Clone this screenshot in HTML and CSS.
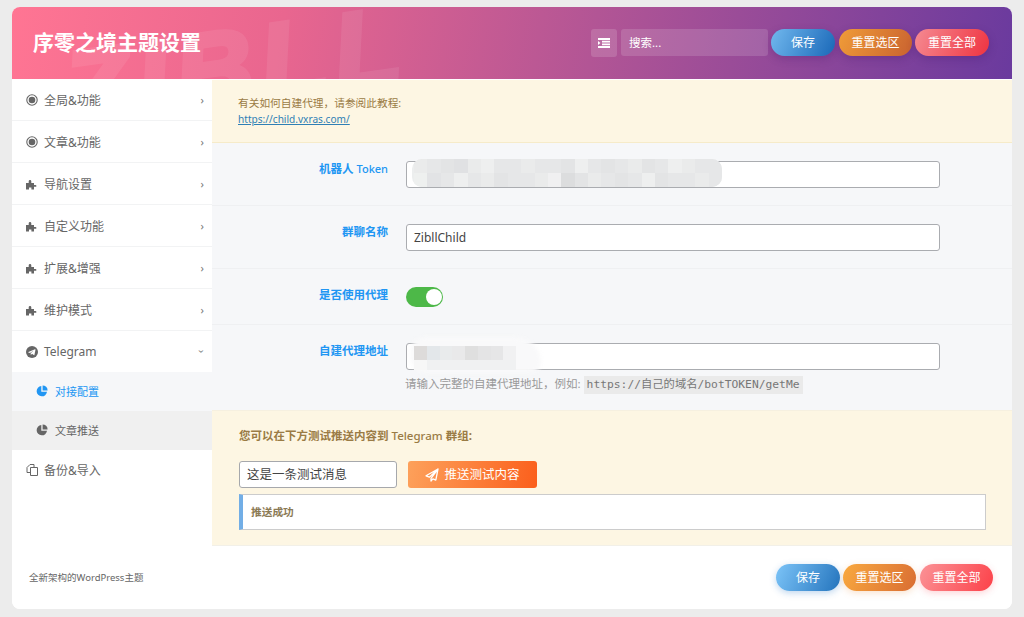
FILE: index.html
```html
<!DOCTYPE html>
<html lang="zh">
<head>
<meta charset="utf-8">
<title>序零之境主题设置</title>
<link rel="stylesheet" href="styles.css">
</head>
<body>
<svg class="defs" width="0" height="0">
  <symbol id="i-target" viewBox="0 0 12 12"><circle cx="6" cy="6" r="5.200" fill="none" stroke="currentColor" stroke-width="1.100"/><circle cx="6" cy="6" r="3.300" fill="currentColor"/></symbol>
  <symbol id="i-puzzle" viewBox="0 0 12 12"><path fill="currentColor" d="M0 11.500V5h2.700V3.300a1.300 1.300 0 1 1 2.600 0V5H8v2h1.500a.9.9 0 1 1 0 1.800H8v2.700H5.400V9.500H3v2z"/></symbol>
  <symbol id="i-pie" viewBox="0 0 12 12"><path fill="currentColor" d="M5.300 1A5.200 5.200 0 1 0 11 6.800H5.300zM6.600.4v5h5A5 5 0 0 0 6.600.4z"/></symbol>
  <symbol id="i-tg" viewBox="0 0 12 12"><circle cx="6" cy="6" r="6" fill="currentColor"/><path fill="#fff" d="M2.400 5.900 9 3.300c.3-.1.600.1.500.5L8.400 8.900c-.1.300-.4.400-.7.200L6 7.800l-.9.900c-.2.100-.4 0-.4-.2V7.200l3-2.600-3.700 2.300-1.600-.5c-.3-.1-.3-.4 0-.5z"/></symbol>
  <symbol id="i-copy" viewBox="0 0 12 12"><path fill="none" stroke="currentColor" stroke-width="1" stroke-linejoin="round" d="M4.500 3.500h7v8h-7zM4.500 8.500h-3.500v-5l3-3h4v3"/></symbol>
</svg>
<div class="card">
  <header class="top">
    <span class="watermark">ZIBLL</span>
    <h1 class="brand">序零之境主题设置</h1>
    <div class="tools">
      <span class="menu-btn">
        <svg width="12" height="10" viewBox="0 0 12 10"><path fill="#fff" d="M0 0h12v2H0zM4 2.800h8v1.800H4zM4 5.400h8v1.800H4zM0 8h12v2H0zM0 3l2.400 2L0 7z"/></svg>
      </span>
      <span class="search">搜索...</span>
      <span class="pill pill-blue">保存</span>
      <span class="pill pill-orange">重置选区</span>
      <span class="pill pill-red">重置全部</span>
    </div>
  </header>
  <div class="body">
    <nav class="side">
      <a class="nav"><svg class="ico"><use href="#i-target"/></svg>全局&amp;功能<span class="chev">›</span></a>
      <a class="nav"><svg class="ico"><use href="#i-target"/></svg>文章&amp;功能<span class="chev">›</span></a>
      <a class="nav"><svg class="ico"><use href="#i-puzzle"/></svg>导航设置<span class="chev">›</span></a>
      <a class="nav"><svg class="ico"><use href="#i-puzzle"/></svg>自定义功能<span class="chev">›</span></a>
      <a class="nav"><svg class="ico"><use href="#i-puzzle"/></svg>扩展&amp;增强<span class="chev">›</span></a>
      <a class="nav"><svg class="ico"><use href="#i-puzzle"/></svg>维护模式<span class="chev">›</span></a>
      <a class="nav nav-open"><svg class="ico"><use href="#i-tg"/></svg>Telegram<span class="chev chev-down">›</span></a>
      <a class="sub sub-on"><svg class="ico"><use href="#i-pie"/></svg>对接配置</a>
      <a class="sub sub-off"><svg class="ico"><use href="#i-pie"/></svg>文章推送</a>
      <a class="nav nav-last"><svg class="ico"><use href="#i-copy"/></svg>备份&amp;导入</a>
    </nav>
    <main class="main">
      <section class="notice">
        <p class="notice-line">有关如何自建代理，请参阅此教程:</p>
        <a class="notice-link">https://child.vxras.com/</a>
      </section>
      <section class="row row-token">
        <label class="lbl">机器人 <span class="lbl-latin">Token</span></label>
        <div class="field">
          <div class="input"></div>
          <div class="blur blur-token">
            <i></i><i></i><i></i><i></i><i></i><i></i><i></i><i></i><i></i><i></i><i></i><i></i><i></i><i></i><i></i><i></i><i></i><i></i><i></i><i></i><i></i><i></i><i></i>
            <i></i><i></i><i></i><i></i><i></i><i></i><i></i><i></i><i></i><i></i><i></i><i></i><i></i><i></i><i></i><i></i><i></i><i></i><i></i><i></i><i></i><i></i><i></i>
          </div>
        </div>
      </section>
      <section class="row row-group">
        <label class="lbl">群聊名称</label>
        <div class="field"><div class="input">ZibllChild</div></div>
      </section>
      <section class="row row-switch">
        <label class="lbl">是否使用代理</label>
        <div class="field"><span class="switch"><span class="knob"></span></span></div>
      </section>
      <section class="row row-proxy">
        <label class="lbl">自建代理地址</label>
        <div class="field">
          <div class="input"></div>
          <div class="blob"></div>
          <div class="blur blur-proxy">
            <i></i><i></i><i></i><i></i><i></i><i></i><i></i><i></i>
            <i></i><i></i><i></i><i></i><i></i><i></i><i></i><i></i>
          </div>
          <p class="hint">请输入完整的自建代理地址，例如: <code class="code">https://自己的域名/botTOKEN/getMe</code></p>
        </div>
      </section>
      <section class="test">
        <p class="test-title">您可以在下方测试推送内容到 <span class="title-latin">Telegram</span> 群组:</p>
        <div class="test-form">
          <div class="test-input">这是一条测试消息</div>
          <span class="push-btn">
            <svg width="14" height="14" viewBox="0 0 14 14"><path fill="none" stroke="#fff" stroke-width="1.300" stroke-linejoin="round" d="M13 1 1 7.800l3.400 1.400L13 1 6 10.300v2.700l1.900-2.100 2.900 1.200z"/></svg>
            推送测试内容
          </span>
        </div>
        <div class="result">推送成功</div>
      </section>
    </main>
  </div>
  <footer class="foot">
    <span class="foot-text">全新架构的WordPress主题</span>
    <div class="foot-btns">
      <span class="pill pill-blue2">保存</span>
      <span class="pill pill-orange2">重置选区</span>
      <span class="pill pill-red2">重置全部</span>
    </div>
  </footer>
</div>
</body>
</html>
```
FILE: styles.css
```css
* { box-sizing: border-box; }
html, body { margin: 0; height: 617px; overflow: hidden; }
body {
  background: #ececec;
  padding: 7px 12px 8px;
  font-family: "Noto Sans", "Noto Sans CJK SC", "Liberation Sans", sans-serif;
  font-size: 12px;
  color: #555;
}
.defs { position: absolute; }
.card {
  height: 602px;
  background: #fff;
  border-radius: 8px;
  overflow: hidden;
  display: flex;
  flex-direction: column;
}
.top {
  position: relative;
  height: 72px;
  flex: none;
  display: flex;
  align-items: center;
  justify-content: space-between;
  padding: 0 23px 2px 21px;
  overflow: hidden;
  background: linear-gradient(100deg, #ff7593 0%, #e9668f 27%, #b25595 58%, #6a3a9e 100%);
}
.watermark {
  position: absolute;
  left: 60px;
  top: 30px;
  font: italic 700 108px/1 "Liberation Sans", sans-serif;
  letter-spacing: 8px;
  color: #fff;
  -webkit-text-stroke: 5px #fff;
  opacity: .08;
  transform: rotate(-8deg);
  transform-origin: left bottom;
}
.brand {
  position: relative;
  margin: 0 0 2px;
  font-size: 21px;
  line-height: 28px;
  font-weight: 700;
  color: #fff;
  font-family: "Noto Sans CJK SC", sans-serif;
}
.tools { position: relative; display: flex; align-items: flex-start; margin-top: 1px; }
.menu-btn {
  width: 26px;
  height: 28px;
  margin-right: 4px;
  border-radius: 3px;
  background: rgba(255, 255, 255, .15);
  display: flex;
  align-items: center;
  justify-content: center;
}
.search {
  width: 147px;
  height: 27px;
  padding-left: 8px;
  margin-right: 3px;
  border-radius: 3px;
  background: rgba(255, 255, 255, .14);
  color: #fff;
  font-size: 11.500px;
  line-height: 27px;
}
.pill {
  height: 27px;
  border-radius: 14px;
  color: #fff;
  font-size: 12px;
  line-height: 27px;
  text-align: center;
  box-shadow: 0 3px 8px rgba(60, 20, 100, .25);
}
.pill-blue { width: 64px; background: linear-gradient(115deg, #71b8ee, #1a68b8); }
.pill-orange { width: 73px; margin-left: 4px; background: linear-gradient(115deg, #f09c38, #c96230); }
.pill-red { width: 74px; margin-left: 3px; background: linear-gradient(115deg, #f58a92, #ef3340); }
.body { flex: 1; display: flex; min-height: 0; }
.side { width: 200px; flex: none; background: #fff; }
.nav {
  height: 42px;
  display: flex;
  align-items: center;
  padding: 0 0 0 14px;
  color: #666;
  font-size: 12px;
  border-bottom: 1px solid #f2f3f4;
}
.nav-open { height: 41px; border-bottom: 0; }
.nav-last { height: 40px; border-bottom: 0; }
.ico { width: 12px; height: 12px; margin-right: 6px; color: #666; flex: none; }
.nav .chev { margin-left: auto; margin-right: 8px; font-size: 11px; color: #777; }
.chev-down { transform: rotate(90deg); }
.sub {
  height: 39px;
  display: flex;
  align-items: center;
  padding: 0 0 1px 24px;
  font-size: 11px;
  color: #666;
}
.sub .ico { margin-right: 7px; }
.sub-on { background: #f6f7f9; color: #2196f3; }
.sub-on .ico { color: #2196f3; }
.sub-off { background: #f0f0f0; }
.main { flex: 1; background: #f6f7f9; min-width: 0; }
.notice {
  height: 64px;
  padding: 15px 26px 0;
  background: #fdf6e3;
  border-bottom: 1px solid #f6ebc9;
  border-top: 1px solid #fff;
  color: #9a7b45;
  font-size: 10.700px;
  line-height: 16px;
}
.notice-line { margin: 0; }
.notice-link { font-size: 10.100px; color: #2f7fb5; text-decoration: underline; }
.row {
  display: flex;
  border-bottom: 1px solid #eff0f2;
}
.row-token { height: 63px; padding-top: 18px; }
.row-group { height: 63px; padding-top: 18px; }
.row-switch { height: 56px; padding-top: 18px; }
.row-proxy { height: 86px; padding-top: 18px; border-bottom: 1px solid #f6f0e0; }
.lbl {
  width: 176px;
  text-align: right;
  color: #2196f3;
  font-size: 11.500px;
  line-height: 16px;
  font-weight: 700;
  flex: none;
}
.lbl-latin { font-weight: 500; font-size: 11px; }
.field { position: relative; margin-left: 18px; width: 534px; }
.input {
  height: 27px;
  border: 1px solid #aaacb0;
  border-radius: 3px;
  background: #fff;
  padding-left: 7px;
  line-height: 25px;
  font-size: 12px;
  color: #444;
}
.switch {
  display: block;
  position: relative;
  width: 37px;
  height: 20px;
  border-radius: 10px;
  background: #4db848;
}
.knob {
  position: absolute;
  right: 1px;
  top: 2px;
  width: 16px;
  height: 16px;
  border-radius: 50%;
  background: #fff;
}
.blur {
  position: absolute;
  display: grid;
  overflow: hidden;
  filter: blur(.6px);
}
.blur-token {
  left: 6px;
  top: -2px;
  width: 310px;
  height: 28px;
  padding-left: 2px;
  border-radius: 10px;
  background: #eceeee;
  grid-template-columns: repeat(23, 1fr);
  grid-template-rows: 1fr 1fr;
}
.blur-token i { background: #e6e7e8; }
.blur-token i:nth-child(3n) { background: #e3e4e5; }
.blur-token i:nth-child(4n+1) { background: #eaebeb; }
.blur-token i:nth-child(7n+6) { background: #eeefef; }
.blur-token i:nth-child(35) { background: #dcddde; }
.blur-token i:nth-child(34) { background: #f0f0f1; }
.blur-token i:nth-child(4) { background: #e0e1e3; }
.blur-token i:nth-child(24) { background: #eef0ef; }
.blur-token i:nth-child(25) { background: #e2e3e5; }
.blob {
  position: absolute;
  left: 5px;
  top: -6px;
  width: 130px;
  height: 36px;
  border-radius: 16px 30px 12px 18px;
  background: #f9f9fa;
  filter: blur(2px);
}
.blur-proxy {
  left: 8px;
  top: 3px;
  width: 102px;
  height: 24px;
  grid-template-columns: repeat(8, 1fr);
  grid-template-rows: 14px 10px;
}
.blur-proxy i { background: #eeeeef; }
.blur-proxy i:nth-child(1) { background: #dddbda; }
.blur-proxy i:nth-child(2) { background: #e3e7ea; }
.blur-proxy i:nth-child(3) { background: #e9ebec; }
.blur-proxy i:nth-child(4) { background: #e9e9ea; }
.blur-proxy i:nth-child(5) { background: #dfdfdf; }
.blur-proxy i:nth-child(6) { background: #e4e4e5; }
.blur-proxy i:nth-child(7) { background: #e6e6e7; }
.blur-proxy i:nth-child(8) { background: #f1f1f2; }
.blur-proxy i:nth-child(9) { background: #f7f7f7; }
.blur-proxy i:nth-child(n+10) { background: #f0f1f2; }
.hint { position: relative; margin: 5px 0 0 -1px; color: #999; font-size: 11.500px; line-height: 18px; white-space: nowrap; }
.code {
  display: inline-block;
  padding: 0 3px;
  background: #eaeaea;
  color: #777;
  font-family: "DejaVu Sans Mono", "Noto Sans CJK SC", monospace;
  font-size: 11.300px;
}
.test { height: 135px; padding: 17px 26px 0 27px; background: #fdf6e3; border-bottom: 1px solid #f2f0e8; }
.test-title { margin: 0 0 17px; font-size: 11.500px; line-height: 16px; font-weight: 700; color: #9a7b45; }
.title-latin { font-weight: 500; }
.test-form { display: flex; align-items: flex-start; margin-bottom: 6px; }
.test-input {
  width: 158px;
  height: 27px;
  border: 1px solid #a6a8ac;
  border-radius: 3px;
  background: #fff;
  padding-left: 7px;
  line-height: 25px;
  font-size: 12.500px;
  color: #444;
}
.push-btn {
  width: 129px;
  height: 27px;
  margin-left: 11px;
  border-radius: 3px;
  background: linear-gradient(100deg, #fda15b, #fb5f1c);
  color: #fff;
  font-size: 12.500px;
  line-height: 27px;
  display: flex;
  align-items: center;
  justify-content: center;
  gap: 5px;
}
.result {
  height: 36px;
  border: 1px solid #ccc;
  border-left: 4px solid #72aee6;
  background: #fff;
  padding-left: 8px;
  line-height: 34px;
  font-size: 10.700px;
  font-weight: 700;
  color: #8b7a55;
}
.foot {
  height: 63px;
  flex: none;
  display: flex;
  align-items: center;
  justify-content: space-between;
  padding: 0 19px 0 17px;
  background: #fff;
}
.foot-text { font-size: 9.500px; color: #666; margin-bottom: 2px; }
.foot-btns { display: flex; }
.pill-blue2 { width: 64px; background: linear-gradient(115deg, #7cc4f8, #2474bd); box-shadow: 0 2px 7px rgba(40, 120, 200, .3); }
.pill-orange2 { width: 73px; margin-left: 3px; background: linear-gradient(115deg, #f9a93f, #d96d33); box-shadow: 0 2px 7px rgba(230, 140, 60, .25); }
.pill-red2 { width: 73px; margin-left: 4px; background: linear-gradient(115deg, #fb9296, #fc4149); box-shadow: 0 2px 7px rgba(250, 80, 90, .25); }
```
